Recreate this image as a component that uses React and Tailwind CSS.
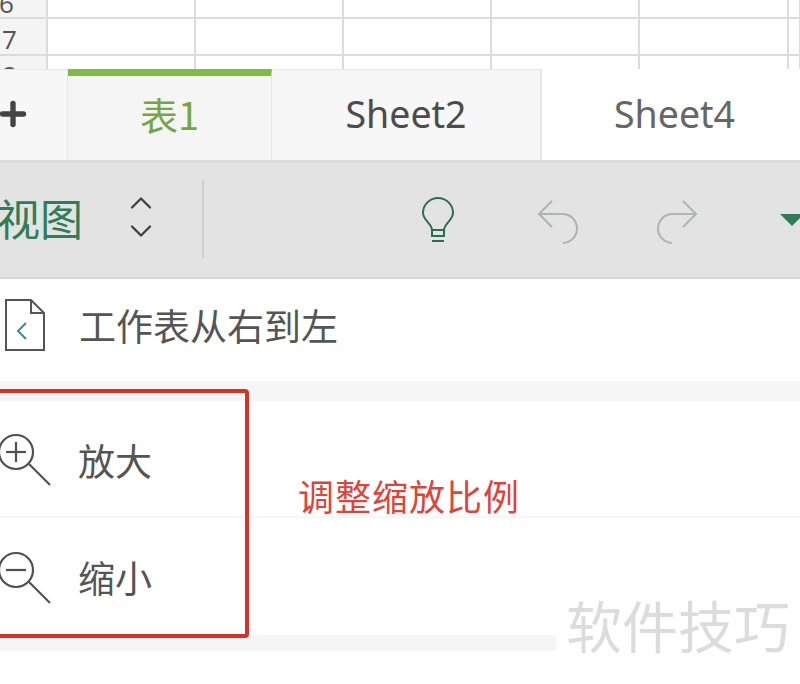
import React from 'react';
import { Plus, ChevronUp, ChevronDown } from 'lucide-react';

const cjk = "font-['Noto_Sans_CJK_SC','Noto_Sans',sans-serif]";

function SheetGrid() {
    const cols = [148, 148, 148, 148, 149, 12];
    return (
        <div className="h-[69px] flex overflow-hidden bg-white">
            <div className="w-[48px] shrink-0 bg-[#f4f4f4] border-r-2 border-[#dcdcdc] text-[#555] text-[26px] font-['Open_Sans',sans-serif]">
                <div className="h-[19px] leading-[6px] -ml-[1px] border-b-2 border-[#dcdcdc]">6</div>
                <div className="h-[37px] leading-[40px] pl-[2px] border-b-2 border-[#dcdcdc]">7</div>
                <div className="h-[13px] pl-[2px] leading-[38px] overflow-hidden">8</div>
            </div>
            {cols.map((w, i) => (
                <div key={i} style={{ width: w }} className="shrink-0 border-r-2 border-[#dcdcdc]">
                    <div className="h-[19px] border-b-2 border-[#dcdcdc]" />
                    <div className="h-[37px] border-b-2 border-[#dcdcdc]" />
                </div>
            ))}
        </div>
    );
}

function Tabs() {
    return (
        <div className="h-[94px] flex bg-white border-b-[3px] border-[#dcdcdc] font-['Noto_Sans',sans-serif]">
            <div className="w-[68px] shrink-0 bg-[#f7f7f7] border-r border-[#e6e6e6] border-t border-t-[#e8e8e8] flex items-center">
                <Plus size={36} strokeWidth={3.6} className="text-[#444] -ml-[5px] -mt-[2px]" />
            </div>
            <div className="w-[204px] shrink-0 bg-[#f5f5f5] border-r border-[#e6e6e6] border-t-[7px] border-t-[#80bb47] flex items-center justify-center">
                <span className={`${cjk} text-[38px] text-[#76a544] -mt-[9px]`}>表1</span>
            </div>
            <div className="w-[270px] shrink-0 bg-[#f7f7f7] border-r-2 border-[#e6e6e6] border-t border-t-[#e8e8e8] flex items-center justify-center">
                <span className="text-[37.5px] text-[#4c4c4c] -mt-[1px]">Sheet2</span>
            </div>
            <div className="flex-1 flex items-center pl-[72px]">
                <span className="text-[37.5px] text-[#666] -mt-[1px]">Sheet4</span>
            </div>
        </div>
    );
}

function BulbIcon() {
    return (
        <svg width="34" height="46" viewBox="0 0 34 46" fill="none" stroke="#2c6e51" strokeWidth="2" className="shrink-0">
            <path d="M11 33C11 27 2 23 2 16A15 15 0 0 1 32 16C32 23 23 27 23 33Z" />
            <path d="M11 33V39H23V33" />
            <path d="M11 44H23" />
        </svg>
    );
}

function UndoIcon({ flip }) {
    return (
        <svg width="44" height="46" viewBox="0 0 44 46" fill="none" stroke="#aeb4b1" strokeWidth="2" className={flip ? 'shrink-0 -scale-x-100' : 'shrink-0'}>
            <path d="M15 2L2 15L15 28" />
            <path d="M2 15H25A14.5 14.5 0 0 1 26 44" />
        </svg>
    );
}

function Toolbar() {
    return (
        <div className="h-[116px] flex items-center bg-[#e3e3e3] border-b-2 border-[#d6d6d6]">
            <span className={`${cjk} w-[126px] shrink-0 -ml-[3px] text-[43px] text-[#2f7d58] -mt-[6px]`}>视图</span>
            <div className="w-[36px] shrink-0 flex flex-col items-center text-[#3f3f3f] -mt-[6px]">
                <ChevronUp size={36} strokeWidth={1.5} className="-mb-[8px]" />
                <ChevronDown size={36} strokeWidth={1.5} />
            </div>
            <div className="w-[2px] h-[78px] ml-[43px] mr-[217px] bg-[#d0d0d0] -mt-[2px] shrink-0" />
            <BulbIcon />
            <div className="ml-[82px] shrink-0 mt-[4px]"><UndoIcon /></div>
            <div className="ml-[73px] shrink-0 mt-[4px]"><UndoIcon flip /></div>
            <div className="ml-[82px] shrink-0 w-0 h-0 border-l-[12px] border-r-[12px] border-t-[12px] border-l-transparent border-r-transparent border-t-[#2f7d58]" />
        </div>
    );
}

function FileBackIcon() {
    return (
        <svg width="41" height="54" viewBox="0 0 41 54" fill="none" className="shrink-0 -mt-[10px]">
            <path d="M2 2H27L40 15V52H2Z" stroke="#555" strokeWidth="2" />
            <path d="M27 2V15H40" stroke="#555" strokeWidth="2" />
            <path d="M22 25L14 33L22 41" stroke="#3c8a9a" strokeWidth="2" />
        </svg>
    );
}

function ZoomIcon({ plus }) {
    return (
        <svg width="52" height="56" viewBox="0 0 52 56" fill="none" className="shrink-0 mt-[4px]">
            <circle cx="16" cy="19" r="17" stroke="#505050" strokeWidth="2.2" />
            <path d="M6 19H26" stroke="#505050" strokeWidth="2.2" />
            {plus && <path d="M16 9V29" stroke="#505050" strokeWidth="2.2" />}
            <path d="M29 31L50 52" stroke="#505050" strokeWidth="2.2" />
        </svg>
    );
}

function ZoomRow({ plus, label, border, textClass }) {
    return (
        <div className={`h-[117px] flex items-center ${border ? 'border-b-2 border-[#f6f6f6]' : ''}`}>
            <ZoomIcon plus={plus} />
            <span className={`${cjk} ml-[26px] text-[37px] text-[#555] ${textClass}`}>{label}</span>
        </div>
    );
}

export default function App() {
    return (
        <div className={`relative w-[800px] h-[684px] overflow-hidden bg-white ${cjk}`}>
            <SheetGrid />
            <Tabs />
            <Toolbar />
            <div className="h-[102px] flex items-center pl-[4px]">
                <FileBackIcon />
                <span className={`${cjk} ml-[34px] text-[37px] text-[#555] -mt-[8px]`}>工作表从右到左</span>
            </div>
            <div className="h-[20px] bg-[#f6f6f6]" />
            <ZoomRow plus label="放大" border textClass="mt-[5px]" />
            <ZoomRow label="缩小" textClass="mt-[3px]" />
            <div className="h-[16px] bg-[#f5f5f5]" />

            <div className="absolute left-[-8px] top-[389px] w-[257px] h-[249px] border-[4px] border-[#d9302a] rounded-[4px]" />
            <span className={`absolute left-[298px] top-[468px] text-[36px] leading-[54px] tracking-[1px] text-[#e0433a] ${cjk}`}>调整缩放比例</span>
            <div className="absolute left-[556px] top-[584px] w-[244px] h-[100px] bg-white pl-[10px] pt-[2px]">
                <span className={`text-[56px] leading-[76px] text-[#dcdcdc] ${cjk}`}>软件技巧</span>
            </div>
        </div>
    );
}
